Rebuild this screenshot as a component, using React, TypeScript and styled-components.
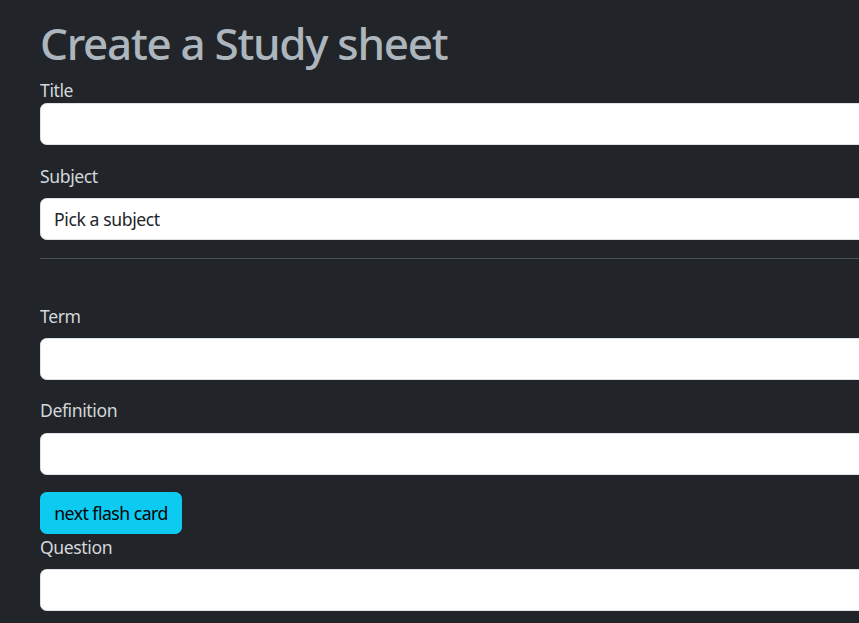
import React from "react";
import styled, { createGlobalStyle } from "styled-components";

const Global = createGlobalStyle`
  html, body { margin: 0; padding: 0; background: #212529; overflow: hidden; }
  body { font-family: "Noto Sans", "Open Sans", sans-serif; }
`;

const Page = styled.main`
  width: 1100px;
  padding: 17px 0 0 40px;
  display: flex;
  flex-direction: column;
  color: #dee2e6;
  font-size: 17.6px;
`;

const Heading = styled.h1`
  margin: 0 0 7px 0;
  font-size: 44px;
  font-weight: 500;
  line-height: 52.8px;
  color: #adb5bd;
  letter-spacing: -1.3px;
`;

const Field = styled.div<{ $gap?: number }>`
  display: flex;
  flex-direction: column;
  margin-bottom: ${(p) => p.$gap ?? 17.6}px;
`;

const Label = styled.label<{ $mb?: number }>`
  display: block;
  line-height: 26.4px;
  margin-bottom: ${(p) => p.$mb ?? 8.8}px;
  color: #d3d7db;
  letter-spacing: -0.4px;
`;

const Input = styled.input`
  box-sizing: border-box;
  width: 100%;
  height: 42px;
  border: 1px solid #dee2e6;
  border-radius: 6.6px;
  background: #fff;
  font: inherit;
  color: #212529;
  padding: 6.6px 13px;
`;

const Select = styled.div`
  box-sizing: border-box;
  width: 100%;
  height: 42px;
  border: 1px solid #dee2e6;
  border-radius: 6.6px;
  background: #fff;
  color: #212529;
  padding: 0 13px;
  display: flex;
  align-items: center;
  letter-spacing: -0.4px;
`;

const Rule = styled.hr`
  border: 0;
  border-top: 1px solid #495057;
  margin: 0 0 44px 0;
  width: 100%;
`;

const Button = styled.button`
  align-self: flex-start;
  height: 42px;
  padding: 0 13.2px;
  background: #0dcaf0;
  border: 1px solid #0dcaf0;
  border-radius: 6.6px;
  color: #000;
  font: inherit;
  letter-spacing: -0.5px;
`;

export default function App() {
  return (
    <>
      <Global />
      <Page>
        <Heading>Create a Study sheet</Heading>
        <Field>
          <Label $mb={0}>Title</Label>
          <Input type="text" />
        </Field>
        <Field>
          <Label>Subject</Label>
          <Select>Pick a subject</Select>
        </Field>
        <Rule />
        <Field>
          <Label>Term</Label>
          <Input type="text" />
        </Field>
        <Field>
          <Label>Definition</Label>
          <Input type="text" />
        </Field>
        <Button>next flash card</Button>
        <Field>
          <Label>Question</Label>
          <Input type="text" />
        </Field>
      </Page>
    </>
  );
}
